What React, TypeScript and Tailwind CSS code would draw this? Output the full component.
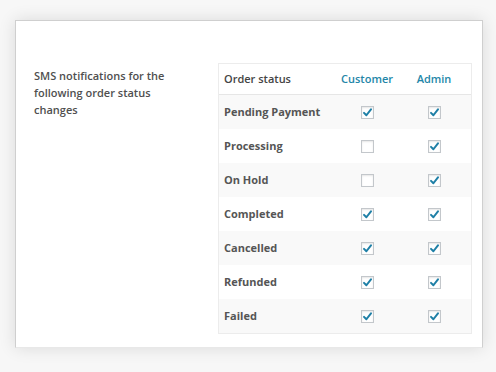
import React from "react";

const rows: { name: string; customer: boolean; admin: boolean }[] = [
  { name: "Pending Payment", customer: true, admin: true },
  { name: "Processing", customer: false, admin: true },
  { name: "On Hold", customer: false, admin: true },
  { name: "Completed", customer: true, admin: true },
  { name: "Cancelled", customer: true, admin: true },
  { name: "Refunded", customer: true, admin: true },
  { name: "Failed", customer: true, admin: true },
];

function Box({ checked }: { checked: boolean }) {
  return (
    <div className="w-[13px] h-[13px] border border-[#c3c7cb] bg-white shadow-[inset_0_1px_2px_rgba(0,0,0,0.1)] flex items-center justify-center">
      {checked && (
        <svg width="11" height="11" viewBox="0 0 12 12">
          <path d="M2.2 6.4 L4.8 9 L9.8 2.6" fill="none" stroke="#1e7fa6" strokeWidth="2.2" strokeLinecap="round" strokeLinejoin="round" />
        </svg>
      )}
    </div>
  );
}

export default function App() {
  return (
    <div
      className="w-[496px] h-[372px] bg-[#f7f7f7] overflow-hidden pt-[20px] pl-[15px]"
      style={{ fontFamily: '"Open Sans", "Noto Sans", sans-serif' }}
    >
      <div className="w-[468px] h-[328px] bg-white border border-[#cfcfcf] border-b-[#e8e8e8] shadow-[0_0_16px_rgba(0,0,0,0.12)] flex items-start pt-[42px] pl-[18px]">
        <div className="w-[184px] pt-[4px]">
          <div className="w-[140px] text-[11px] leading-[17px] font-semibold text-[#4f4f4f]">
            SMS notifications for the following order status changes
          </div>
        </div>
        <div className="w-[254px] border border-[#ececec] text-[11px] font-semibold">
          <div className="flex h-[31px] items-center border-b border-[#e6e6e6] bg-white">
            <div className="w-[118px] pl-[5px] text-[#444]">Order status</div>
            <div className="w-[60px] text-center text-[#2386a8]">Customer</div>
            <div className="w-[74px] text-center text-[#2386a8]">Admin</div>
          </div>
          {rows.map((r, i) => (
            <div
              key={r.name}
              className={`flex h-[34px] items-center ${i % 2 === 0 ? "bg-[#f9f9f9]" : "bg-white"}`}
            >
              <div className="w-[118px] pl-[5px] text-[#555] font-bold whitespace-nowrap">{r.name}</div>
              <div className="w-[60px] flex justify-center">
                <Box checked={r.customer} />
              </div>
              <div className="w-[74px] flex justify-center">
                <Box checked={r.admin} />
              </div>
            </div>
          ))}
        </div>
      </div>
    </div>
  );
}
